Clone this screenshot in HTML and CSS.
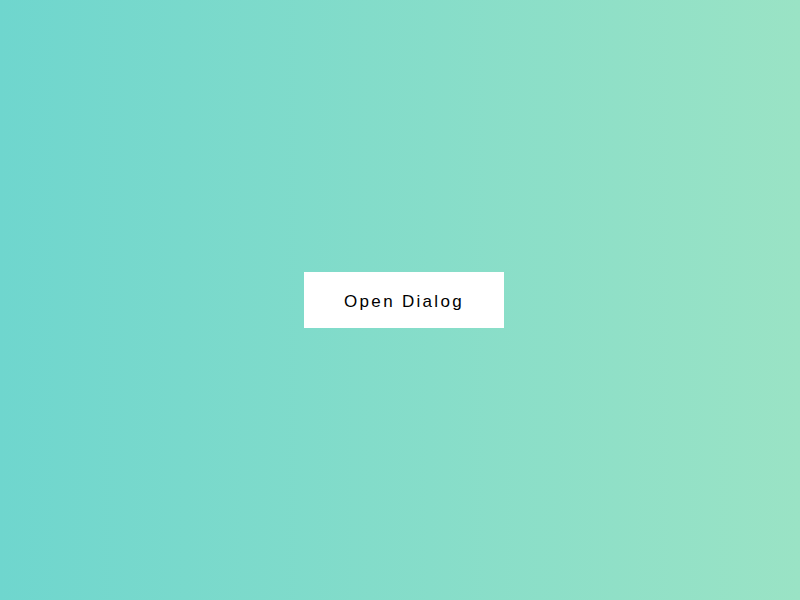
FILE: index.html
```html
<!DOCTYPE html>
<html>
<head>
<meta charset="utf-8">
<link rel="stylesheet" href="styles.css">
</head>
<body>
<main class="stage">
  <button class="open-btn" type="button">Open Dialog</button>
</main>
</body>
</html>
```

FILE: styles.css
```css
html, body {
  margin: 0;
  padding: 0;
  height: 100%;
}
.stage {
  width: 100%;
  height: 100%;
  display: flex;
  align-items: center;
  justify-content: center;
  background: linear-gradient(to right, #6fd6ce, #9ae3c5);
}
.open-btn {
  width: 200px;
  height: 56px;
  margin-left: 8px;
  background: #fff;
  border: none;
  padding: 3px 0 0 0;
  font-family: "Liberation Sans", Arial, sans-serif;
  font-size: 17px;
  letter-spacing: 2.3px;
  color: #000;
  cursor: pointer;
}
```
